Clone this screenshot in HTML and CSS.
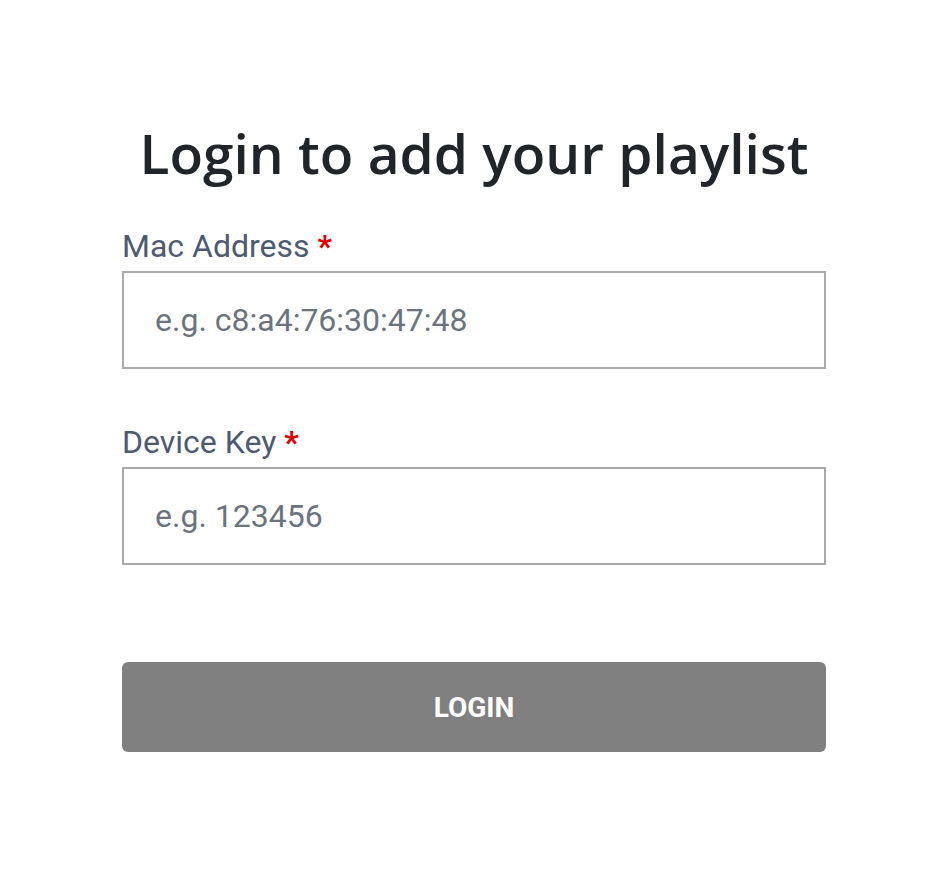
FILE: index.html
```html
<!DOCTYPE html>
<html>
<head>
<meta charset="utf-8">
<link rel="stylesheet" href="styles.css">
</head>
<body>
<main class="page">
  <form class="login">
    <h1 class="title">Login to add your playlist</h1>
    <div class="field">
      <label class="label">Mac Address <span class="req">*</span></label>
      <input class="input" type="text" placeholder="e.g. c8:a4:76:30:47:48">
    </div>
    <div class="field field-second">
      <label class="label">Device Key <span class="req">*</span></label>
      <input class="input" type="text" placeholder="e.g. 123456">
    </div>
    <button class="btn" type="button">LOGIN</button>
  </form>
</main>
</body>
</html>
```
FILE: styles.css
```css
html, body {
  margin: 0;
  padding: 0;
  background: #ffffff;
}
.page {
  padding: 120px 0 0 122px;
}
.login {
  width: 704px;
  display: flex;
  flex-direction: column;
}
.title {
  margin: 0;
  font-family: "Open Sans", sans-serif;
  font-weight: 600;
  font-size: 55px;
  line-height: 66px;
  color: #212529;
  text-align: center;
  letter-spacing: 0;
  white-space: nowrap;
}
.field {
  display: flex;
  flex-direction: column;
  margin-top: 42px;
}
.field-second {
  margin-top: 55px;
}
.label {
  font-family: "Roboto", sans-serif;
  font-size: 32px;
  line-height: 36px;
  color: #4f5a71;
  margin-bottom: 7px;
}
.req {
  color: #e00000;
  font-weight: 700;
}
.input {
  box-sizing: border-box;
  height: 98px;
  border: 2px solid #aaaaaa;
  border-radius: 0;
  padding: 0 31px;
  font-family: "Roboto", sans-serif;
  font-size: 32px;
  color: #495057;
  outline: none;
  margin: 0;
}
.input::placeholder {
  color: #6c737d;
}
.btn {
  margin-top: 97px;
  height: 90px;
  border: none;
  border-radius: 6px;
  background: #808080;
  color: #ffffff;
  font-family: "Roboto", sans-serif;
  font-weight: 700;
  font-size: 28px;
  cursor: pointer;
  padding: 0;
}
```
